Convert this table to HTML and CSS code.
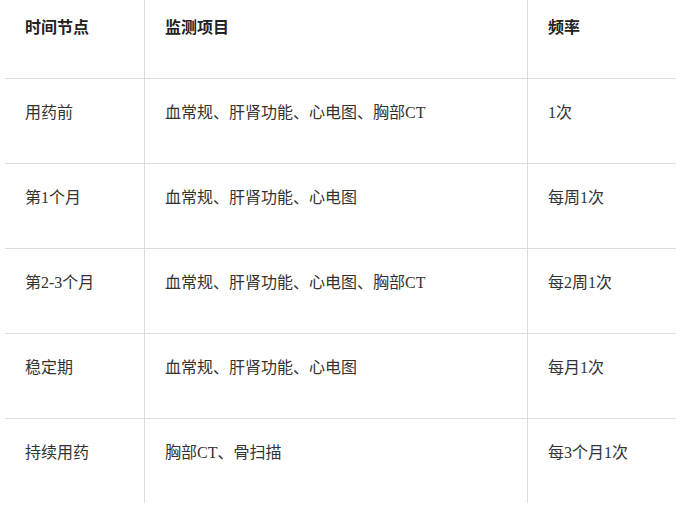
FILE: index.html
```html
<!DOCTYPE html>
<html lang="zh-CN">
<head>
<meta charset="utf-8">
<title>监测计划</title>
<link rel="stylesheet" href="styles.css">
</head>
<body>
<table class="plan">
  <thead>
    <tr>
      <th class="c1">时间节点</th>
      <th class="c2">监测项目</th>
      <th class="c3">频率</th>
    </tr>
  </thead>
  <tbody>
    <tr><td>用药前</td><td>血常规、肝肾功能、心电图、胸部CT</td><td>1次</td></tr>
    <tr><td>第1个月</td><td>血常规、肝肾功能、心电图</td><td>每周1次</td></tr>
    <tr><td>第2-3个月</td><td>血常规、肝肾功能、心电图、胸部CT</td><td>每2周1次</td></tr>
    <tr><td>稳定期</td><td>血常规、肝肾功能、心电图</td><td>每月1次</td></tr>
    <tr class="last"><td>持续用药</td><td>胸部CT、骨扫描</td><td>每3个月1次</td></tr>
  </tbody>
</table>
</body>
</html>
```

FILE: styles.css
```css
html, body {
  background: #ffffff;
}
body {
  margin: 0 0 0 5px;
  font-family: "Liberation Serif", "Noto Sans CJK SC", serif;
  font-size: 16px;
  color: #333333;
}
.plan {
  width: 671px;
  border-collapse: separate;
  border-spacing: 0;
  table-layout: fixed;
}
.plan th,
.plan td {
  box-sizing: border-box;
  text-align: left;
  vertical-align: top;
  line-height: 26px;
  padding: 21px 20px 37px 20px;
  border-bottom: 1px solid #dddddd;
  white-space: nowrap;
}
.plan .c1 { width: 139px; }
.plan .c2 { width: 383px; }
.plan th {
  padding-top: 15px;
  padding-bottom: 37px;
  font-weight: bold;
  color: #222222;
}
.plan th + th,
.plan td + td {
  border-left: 1px solid #dddddd;
}
.plan tr.last td {
  border-bottom: none;
}
```
